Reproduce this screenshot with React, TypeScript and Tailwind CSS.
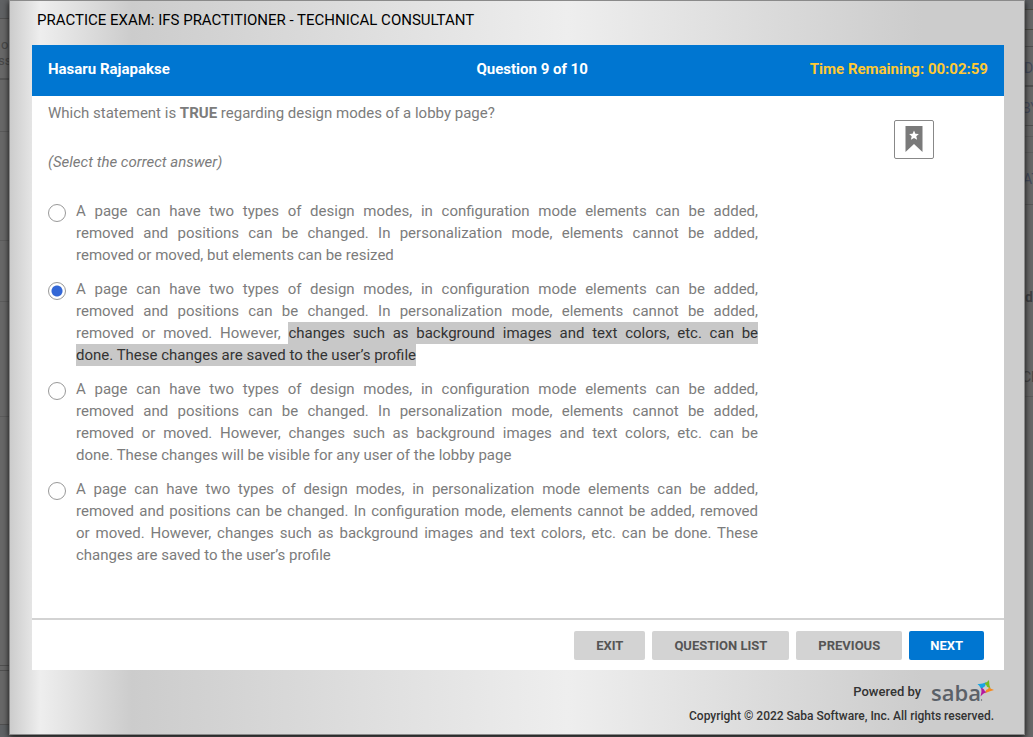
import { useState } from "react";

type Line = { text: string; marked?: string };

const configurationIntro: Line[] = [
  { text: "A page can have two types of design modes, in configuration mode elements can be added," },
  { text: "removed and positions can be changed. In personalization mode, elements cannot be added," },
];

const answers: { id: string; lines: Line[] }[] = [
  {
    id: "a",
    lines: [...configurationIntro, { text: "removed or moved, but elements can be resized" }],
  },
  {
    id: "b",
    lines: [
      ...configurationIntro,
      { text: "removed or moved. However, ", marked: "changes such as background images and text colors, etc. can be" },
      { text: "", marked: "done. These changes are saved to the user’s profile" },
    ],
  },
  {
    id: "c",
    lines: [
      ...configurationIntro,
      { text: "removed or moved. However, changes such as background images and text colors, etc. can be" },
      { text: "done. These changes will be visible for any user of the lobby page" },
    ],
  },
  {
    id: "d",
    lines: [
      { text: "A page can have two types of design modes, in personalization mode elements can be added," },
      { text: "removed and positions can be changed. In configuration mode, elements cannot be added, removed" },
      { text: "or moved. However, changes such as background images and text colors, etc. can be done. These" },
      { text: "changes are saved to the user’s profile" },
    ],
  },
];

function BookmarkIcon() {
  return (
    <svg width="18" height="26" viewBox="0 0 18 26" aria-hidden="true">
      <path d="M.5 0h17v26L9 18 .5 26z" fill="#7a7a7a" />
      <path d="M9 4.500l1.400 3.200 3.500.3-2.600 2.300.8 3.500L9 12l-3.100 1.800.8-3.500L4.100 8l3.500-.3z" fill="#fff" />
    </svg>
  );
}

function SabaLogo() {
  return (
    <span className="flex items-start" role="img" aria-label="saba">
      <span className="font-['Open_Sans',sans-serif] text-[22px] leading-6 font-semibold text-[#5b6168]">saba</span>
      <svg width="17" height="24" viewBox="0 0 17 24" aria-hidden="true" className="-ml-1">
        <path d="M.5 4Q5 4.500 9.500 2L8 6.300Q6.200 7 4.500 9.500Q3 6 .5 4z" fill="#19a5e1" />
        <path d="M7.500 3.600Q10 2.500 12 0Q12 5 13.500 8.500L10 6.800Q9.700 4.800 7.500 3.600z" fill="#77bc1f" />
        <path d="M12 7.200Q13.500 9 17 10Q12 11.500 8 13.300L9.300 9.800Q11.600 9.600 12 7.200z" fill="#f58a1f" />
        <path d="M4.300 7.500L7 9.500Q7.500 11.500 9.500 12Q6 13 3.500 16.500Q5 12 4.300 7.500z" fill="#b5179e" />
        <circle cx="4.500" cy="20" r=".7" fill="#5b6168" />
      </svg>
    </span>
  );
}

function LeftBackdrop() {
  return (
    <div aria-hidden="true" className="flex w-[9px] shrink-0 flex-col overflow-hidden text-[13px] leading-4 text-[#474747]">
      <div className="h-[19px] shrink-0 border-b border-[#505050] bg-[#606264]" />
      <div className="h-[61px] shrink-0 border-b-2 border-[#555] pt-[18px]">
        <p className="pl-px">o</p>
        <p className="-ml-[2px]">ss</p>
      </div>
      <div className="h-[52px] shrink-0 border-b border-[#5a5a5a]" />
      <div className="h-[109px] shrink-0 border-b border-[#5c5c5c]" />
      <div className="h-[61px] shrink-0 border-b border-[#5c5c5c]" />
      <div className="h-[115px] shrink-0 border-b border-[#5c5c5c]" />
      <div className="h-[249px] shrink-0 border-b border-[#505050]" />
      <div className="h-[5px] shrink-0 border-b border-[#505050]" />
      <div className="h-[54px] shrink-0 border-b border-[#505050]" />
      <div className="flex-1 bg-[#5f6265]" />
    </div>
  );
}

function RightBackdrop() {
  return (
    <div aria-hidden="true" className="flex w-2 shrink-0 flex-col overflow-hidden text-[14px] leading-5 text-[#454b5c]">
      <div className="h-[10px] shrink-0 border-b border-[#4c4c44] bg-[#5b5d60]" />
      <div className="h-5 shrink-0 border-b border-[#4c4c44]" />
      <div className="h-[17px] shrink-0 border-b border-[#505050]" />
      <p className="-ml-px h-10 shrink-0 border-b-2 border-[#505050] pt-[11px]">DE</p>
      <p className="-ml-[3px] h-[39px] shrink-0 border-b border-[#505050] pt-[11px]">BY</p>
      <div className="h-[10px] shrink-0" />
      <div className="h-[17px] shrink-0 border-y border-[#5e5e5e]" />
      <p className="-ml-[2px] h-[52px] shrink-0 border-b border-[#585858] pt-4">AT</p>
      <div className="h-[82px] shrink-0" />
      <p className="h-20 shrink-0 font-bold text-[#404144]">d</p>
      <p className="-ml-[3px] h-[30px] shrink-0 border-b border-[#5c5c5c] text-[#444]">CH</p>
    </div>
  );
}

const greyButton = "h-[29px] rounded-xs bg-[#d3d3d3] px-[22px] pt-px text-[13px] font-bold text-[#555]";

export default function App() {
  const [choice, setChoice] = useState("b");
  return (
    <div className="flex min-h-screen overflow-hidden bg-[#686868] font-[Roboto,sans-serif]">
      <LeftBackdrop />
      <main className="relative z-10 mb-[2px] flex flex-1 flex-col border border-[#8a8a8a] bg-[linear-gradient(90deg,#ccc_0%,#eee_3%,#ccc_12%,#eee_55%,#ccc_90%)] pr-5 pl-[22px] shadow-[0_2px_6px_#111]">
        <h1 className="px-[5px] pt-[7px] pb-[13px] text-[15px] leading-6 text-black">PRACTICE EXAM: IFS PRACTITIONER - TECHNICAL CONSULTANT</h1>
        <section className="flex flex-1 flex-col bg-white">
          <header className="grid h-[51px] grid-cols-[35fr_33fr_32fr] items-center bg-[#0076d1] px-4 pb-[2px] text-[15px] font-bold text-white">
            <span>Hasaru Rajapakse</span>
            <span className="text-center">Question 9 of 10</span>
            <span className="text-right text-[#ffc933]">Time Remaining: 00:02:59</span>
          </header>
          <div className="flex flex-1 items-start justify-between pr-[70px] pl-4 text-[15px] leading-[22px] text-[#7c7c7c]">
            <form className="w-full max-w-[710px] pt-[6px]">
              <p>Which statement is <b>TRUE</b> regarding design modes of a lobby page?</p>
              <p className="mt-[27px] italic">(Select the correct answer)</p>
              <div className="mt-[27px] flex flex-col gap-3">
                {answers.map((a) => (
                  <label key={a.id} className="flex items-start gap-[10px]">
                    <input
                      type="radio"
                      name="answer"
                      checked={choice === a.id}
                      onChange={() => setChoice(a.id)}
                      className="mt-1 size-[18px] shrink-0 appearance-none rounded-full border border-[#999] bg-white checked:bg-[radial-gradient(circle,#3367d6_0_5px,#fff_6px)]"
                    />
                    <span className="flex-1">
                      {a.lines.map((line) => (
                        <span
                          key={line.text + line.marked}
                          className="block text-justify [text-align-last:justify] last:[text-align-last:left]"
                        >
                          {line.text}
                          {line.marked && <mark className="bg-[#c8c8c8] py-[2px] text-[#333]">{line.marked}</mark>}
                        </span>
                      ))}
                    </span>
                  </label>
                ))}
              </div>
            </form>
            <button type="button" aria-label="Bookmark question" className="mt-6 flex h-[39px] w-10 shrink-0 items-center justify-center rounded-xs border border-[#888] bg-white pb-[2px]">
              <BookmarkIcon />
            </button>
          </div>
          <footer className="flex h-[52px] items-center justify-end gap-[7px] border-t-2 border-[#d3d3d3] pr-5">
            <button type="button" className={greyButton}>EXIT</button>
            <button type="button" className={greyButton}>QUESTION LIST</button>
            <button type="button" className={greyButton}>PREVIOUS</button>
            <button type="button" className="h-[29px] rounded-xs bg-[#0076d1] px-[21px] pt-px text-[13px] font-bold text-white">NEXT</button>
          </footer>
        </section>
        <div className="flex h-16 flex-col items-end pt-[10px] pr-[10px] text-[12px] leading-5 font-medium text-[#333]">
          <div className="flex h-[26px] items-start gap-[10px] text-[13px] leading-6">
            <span>Powered by</span>
            <SabaLogo />
          </div>
          <p>Copyright © 2022 Saba Software, Inc. All rights reserved.</p>
        </div>
      </main>
      <RightBackdrop />
    </div>
  );
}
